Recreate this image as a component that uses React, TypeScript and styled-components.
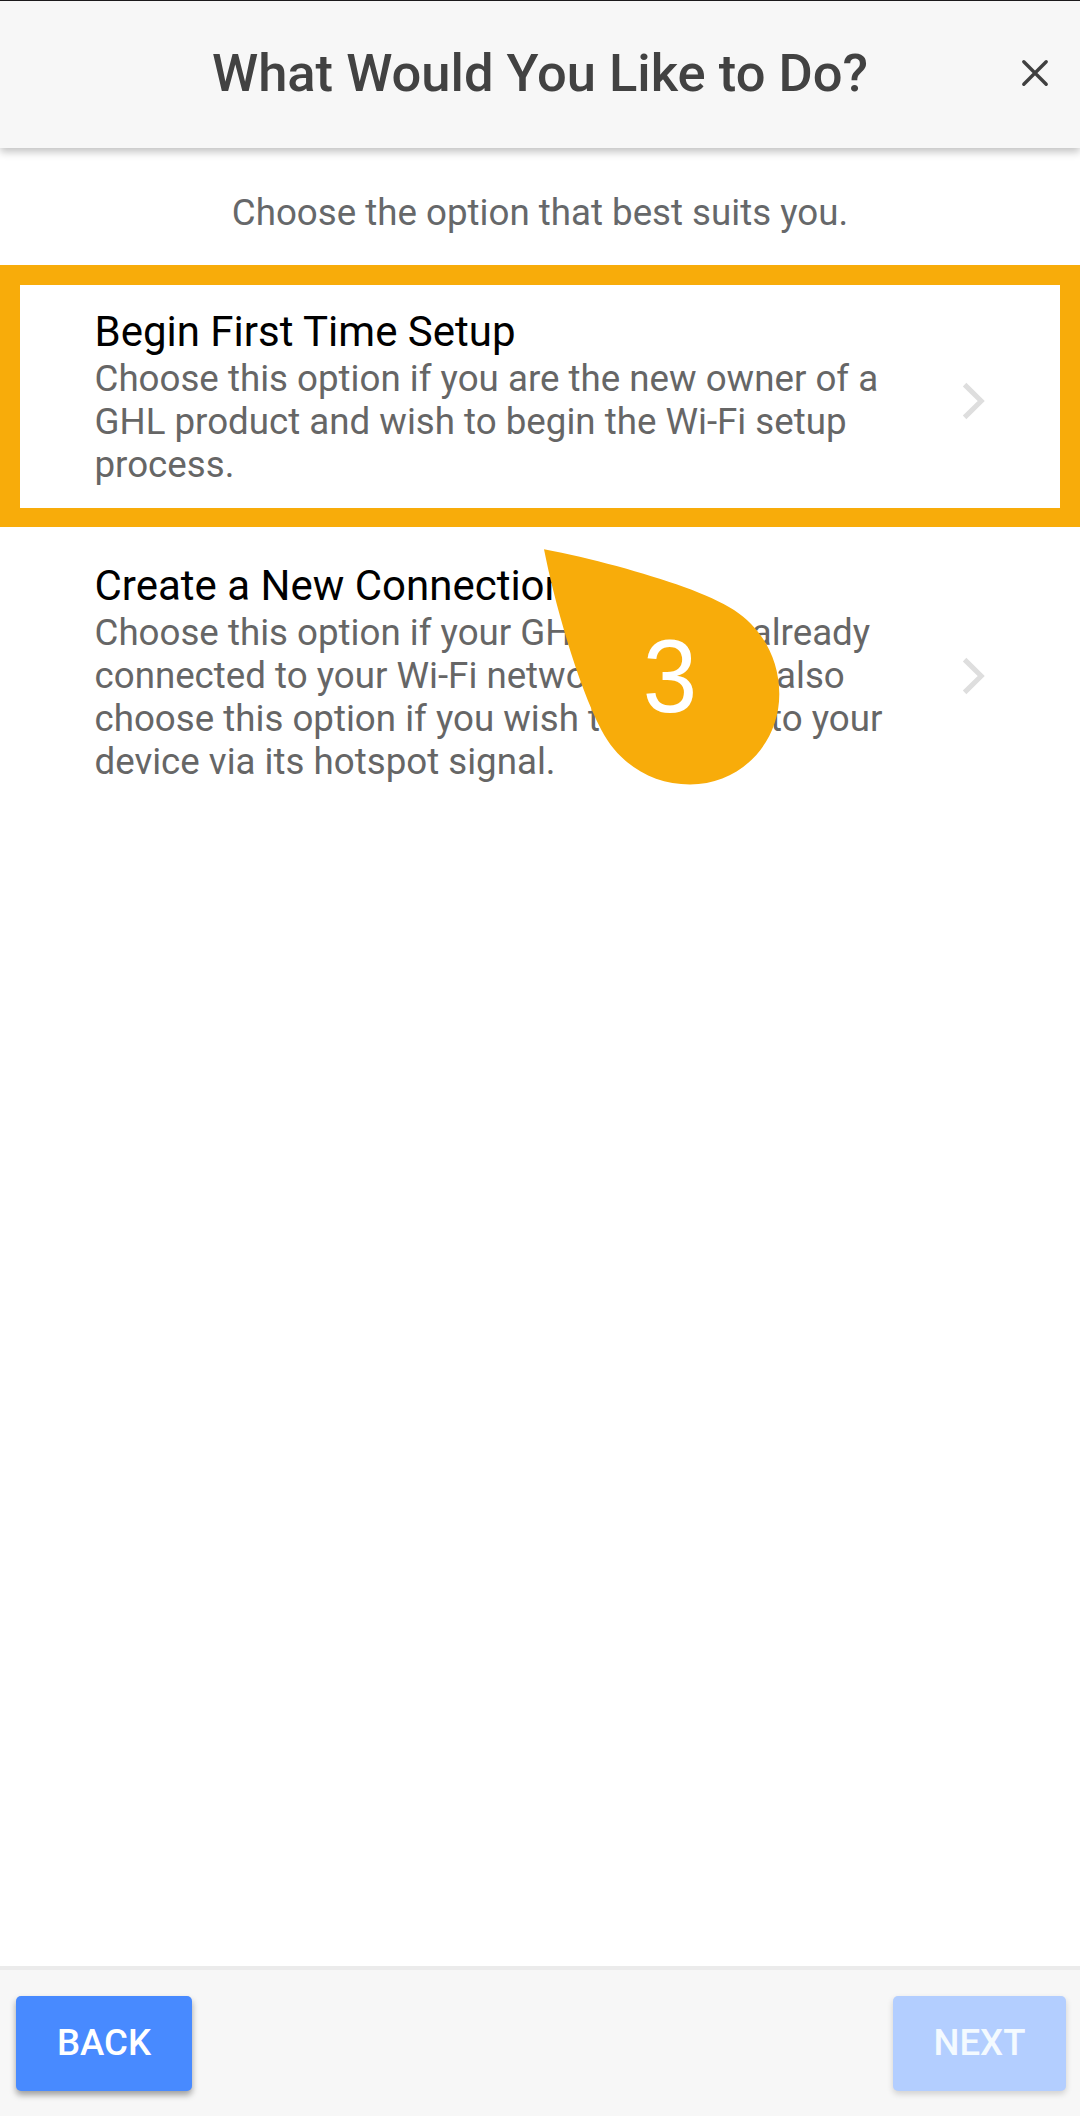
import React from "react";
import styled, { createGlobalStyle } from "styled-components";

const GlobalStyle = createGlobalStyle`
  * { box-sizing: border-box; }
  body { margin: 0; background: #fff; }
`;

const Screen = styled.div`
  display: flex;
  flex-direction: column;
  width: 1080px;
  height: 2116px;
  overflow: hidden;
  background: #fff;
  font-family: Roboto, "Liberation Sans", sans-serif;
`;

const Header = styled.header`
  display: grid;
  grid-template-columns: 90px 1fr 90px;
  align-items: center;
  flex: none;
  height: 148px;
  padding-bottom: 3px;
  border-top: 1px solid #1c1a1c;
  background: #f7f7f7;
  box-shadow: 0 4px 8px rgba(0, 0, 0, 0.24);
`;

const Title = styled.h1`
  grid-column: 2;
  margin: 0;
  color: #424242;
  font-size: 52.5px;
  font-weight: 500;
  line-height: 64px;
  text-align: center;
  white-space: nowrap;
`;

const CloseButton = styled.button`
  display: flex;
  justify-content: center;
  padding: 0;
  border: 0;
  background: none;
`;

const Main = styled.main`
  flex: 1;
`;

const Intro = styled.p`
  margin: 0;
  padding-top: 43px;
  height: 117px;
  color: #66686a;
  font-size: 36.7px;
  line-height: 44px;
  text-align: center;
`;

const Option = styled.section<{ $highlighted?: boolean }>`
  position: relative;
  display: flex;
  align-items: center;
  justify-content: space-between;
  height: ${(p) => (p.$highlighted ? 262 : 289)}px;
  padding: 0 ${(p) => (p.$highlighted ? 75 : 95)}px 0 ${(p) => (p.$highlighted ? 74.5 : 94.5)}px;
  border: solid #f8ac0a;
  border-width: ${(p) => (p.$highlighted ? "20px 20px 19px" : "0")};
`;

const OptionTitle = styled.h2`
  margin: 0;
  color: #000;
  font-size: 42px;
  font-weight: 400;
  line-height: 50px;
`;

const OptionText = styled.p`
  margin: 0;
  color: #666;
  font-size: 36.7px;
  line-height: 43px;
  white-space: nowrap;
`;

const ChevronIcon = styled.svg`
  flex: none;
  margin-top: 8px;
`;

const Marker = styled.div`
  position: absolute;
  left: 544px;
  top: 22px;
  width: 236px;
  height: 236px;
`;

const MarkerShape = styled.svg`
  display: block;
`;

const MarkerNumber = styled.span`
  position: absolute;
  left: 96px;
  top: 68px;
  width: 60px;
  color: #fff;
  font-family: "Liberation Sans", Arial, sans-serif;
  font-size: 103px;
  line-height: 120px;
  text-align: center;
  transform: scaleX(0.95);
`;

const Footer = styled.footer`
  display: flex;
  align-items: flex-start;
  justify-content: space-between;
  flex: none;
  height: 150px;
  padding: 26px 14px 0 16px;
  border-top: 4px solid #ebebeb;
  background: #f7f7f7;
`;

const NavButton = styled.button<{ $width: number }>`
  width: ${(p) => p.$width}px;
  height: 95px;
  padding: 0 0 2px;
  border: 0;
  border-radius: 5px;
  background: #488aff;
  color: #fff;
  box-shadow: 0 4px 6px rgba(0, 0, 0, 0.36);
  font-family: inherit;
  font-size: 36.6px;
  font-weight: 500;
  line-height: 42px;

  &:disabled {
    background: #b3ceff;
    color: #f4faff;
    box-shadow: 0 3px 6px rgba(0, 0, 0, 0.16);
  }
`;

const Chevron = () => (
  <ChevronIcon width="24" height="40" viewBox="0 0 24 40" fill="none">
    <path d="M3.6 3.6 20.2 20 3.6 36.4" stroke="#dedede" strokeWidth="5" />
  </ChevronIcon>
);

export default function App() {
  return (
    <>
      <GlobalStyle />
      <Screen>
        <Header>
          <Title>What Would You Like to Do?</Title>
          <CloseButton aria-label="Close">
            <svg width="28" height="28" viewBox="0 0 28 28" fill="none">
              <path
                d="M2.8 2.8 25.2 25.2M25.2 2.8 2.8 25.2"
                stroke="#404040"
                strokeWidth="3.4"
                strokeLinecap="round"
              />
            </svg>
          </CloseButton>
        </Header>
        <Main>
          <Intro>Choose the option that best suits you.</Intro>
          <Option $highlighted>
            <div>
              <OptionTitle>Begin First Time Setup</OptionTitle>
              <OptionText>
                Choose this option if you are the new owner of a
                <br />
                GHL product and wish to begin the Wi-Fi setup
                <br />
                process.
              </OptionText>
            </div>
            <Chevron />
          </Option>
          <Option>
            <div>
              <OptionTitle>Create a New Connection</OptionTitle>
              <OptionText>
                Choose this option if your GHL device is already
                <br />
                connected to your Wi-Fi network. You can also
                <br />
                choose this option if you wish to connect to your
                <br />
                device via its hotspot signal.
              </OptionText>
            </div>
            <Chevron />
            <Marker>
              <MarkerShape width="236" height="236" viewBox="544 549 236 236">
                <path
                  fill="#f8ac0a"
                  d="M544 549.3C590 558 645 573 684 587C705 594.5 721 602 734 610C763 629 779.3 660 779.3 694C779.3 744 740 784.5 690 784.5C652 784.5 619 764 601.4 730C577 683 554 600 544 549.3Z"
                />
              </MarkerShape>
              <MarkerNumber>3</MarkerNumber>
            </Marker>
          </Option>
        </Main>
        <Footer>
          <NavButton $width={176}>BACK</NavButton>
          <NavButton $width={173} disabled>
            NEXT
          </NavButton>
        </Footer>
      </Screen>
    </>
  );
}
